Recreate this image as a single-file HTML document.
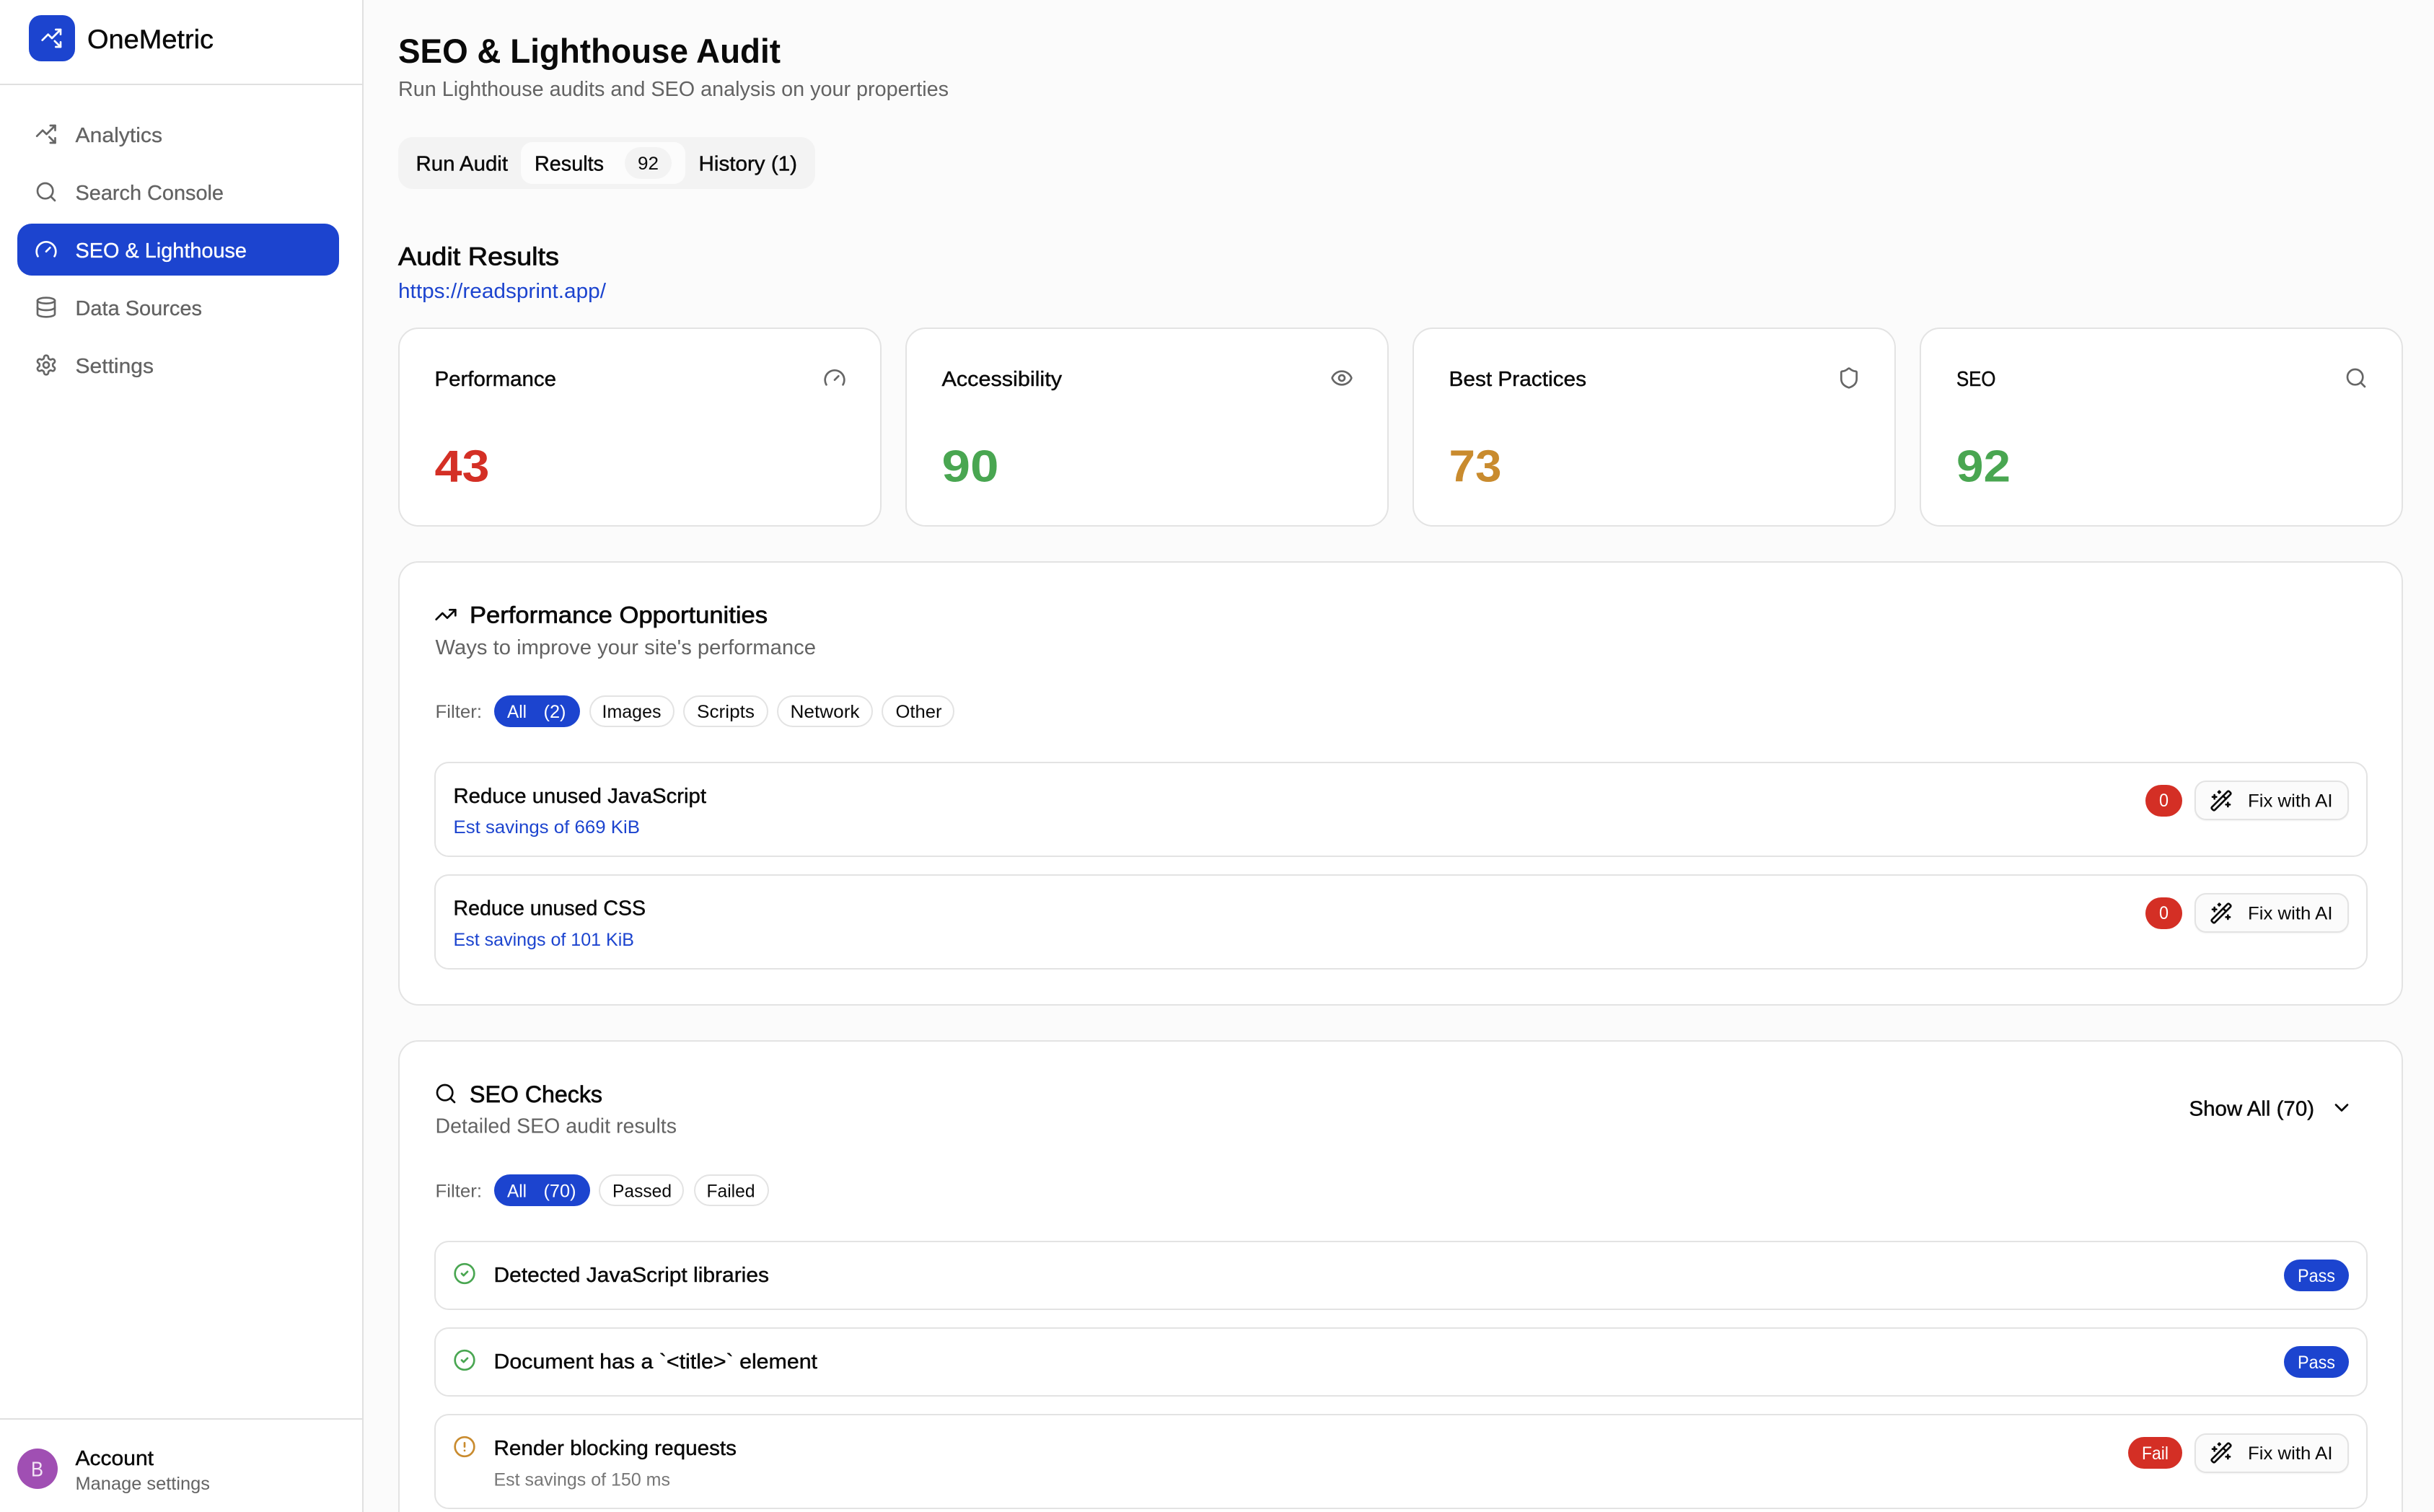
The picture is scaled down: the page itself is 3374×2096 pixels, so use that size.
<!DOCTYPE html>
<html lang="en">
<head>
<meta charset="utf-8">
<title>SEO &amp; Lighthouse Audit</title>
<style>
html,body{margin:0;padding:0;width:3374px;height:2096px;overflow:hidden;background:#fbfbfb;font-family:"Liberation Sans",Arial,sans-serif}
#page{position:relative;width:3374px;height:2096px;overflow:hidden;background:#fbfbfb}
.b{position:absolute;box-sizing:border-box}
.card{background:#fff;border:2px solid #e3e3e3;border-radius:28px}
.row{background:#fff;border:2px solid #e3e3e3;border-radius:20px;left:602px;width:2680px}
.pill{background:#fff;border:2px solid #e3e3e3;border-radius:22px;height:44px}
.blue{background:#1c44cf;border:0}
.red{background:#d42f25;border:0;border-radius:23px}
.fix{background:#fbfbfb;border:2px solid #e3e3e3;border-radius:16px;left:3042px;width:214px;height:55px;box-shadow:0 1px 2px rgba(0,0,0,.05)}
svg.o{position:absolute;left:0;top:0;width:3374px;height:2096px}
text{font-family:"Liberation Sans",Arial,sans-serif;fill:#0a0a0a;white-space:pre}
.m{fill:#636363}.w{fill:#fff}.bl{fill:#1c44cf}
.md{stroke:#0a0a0a;stroke-width:.45px}
.mw{stroke:#fff;stroke-width:.35px}
.mm{stroke:#636363;stroke-width:.3px}
.i{fill:none;stroke-linecap:round;stroke-linejoin:round;stroke-width:2}
</style>
</head>
<body>
<div id="page">
<!-- sidebar -->
<div class="b" style="left:0;top:0;width:504px;height:2096px;background:#fff;border-right:2px solid #e0e0e0"></div>
<div class="b" style="left:0;top:116px;width:502px;height:2px;background:#e0e0e0"></div>
<div class="b" style="left:0;top:1966px;width:502px;height:2px;background:#e0e0e0"></div>
<div class="b" style="left:40px;top:21px;width:64px;height:64px;border-radius:17px;background:#1c44cf"></div>
<div class="b" style="left:24px;top:310px;width:446px;height:72px;border-radius:20px;background:#1c44cf"></div>
<div class="b" style="left:24px;top:2008px;width:56px;height:56px;border-radius:50%;background:#a04fb3"></div>

<!-- tabs -->
<div class="b" style="left:552px;top:190px;width:578px;height:72px;border-radius:20px;background:#f3f3f3"></div>
<div class="b" style="left:722px;top:197px;width:228px;height:58px;border-radius:16px;background:#fcfcfc"></div>
<div class="b" style="left:866px;top:204px;width:65px;height:44px;border-radius:22px;background:#f3f3f3"></div>

<!-- score cards -->
<div class="b card" style="left:552px;top:454px;width:670px;height:276px"></div>
<div class="b card" style="left:1255px;top:454px;width:670px;height:276px"></div>
<div class="b card" style="left:1958px;top:454px;width:670px;height:276px"></div>
<div class="b card" style="left:2661px;top:454px;width:670px;height:276px"></div>

<!-- performance panel -->
<div class="b card" style="left:552px;top:778px;width:2779px;height:616px"></div>
<div class="b pill blue" style="left:685px;top:964px;width:119px"></div>
<div class="b pill" style="left:817px;top:964px;width:118px"></div>
<div class="b pill" style="left:947px;top:964px;width:118px"></div>
<div class="b pill" style="left:1077px;top:964px;width:133px"></div>
<div class="b pill" style="left:1222px;top:964px;width:101px"></div>
<div class="b row" style="top:1056px;height:132px"></div>
<div class="b row" style="top:1212px;height:132px"></div>
<div class="b red" style="left:2974px;top:1088px;width:51px;height:44px"></div>
<div class="b red" style="left:2974px;top:1244px;width:51px;height:44px"></div>
<div class="b fix" style="top:1082px"></div>
<div class="b fix" style="top:1238px"></div>

<!-- seo panel -->
<div class="b card" style="left:552px;top:1442px;width:2779px;height:720px"></div>
<div class="b pill blue" style="left:685px;top:1628px;width:133px"></div>
<div class="b pill" style="left:830px;top:1628px;width:118px"></div>
<div class="b pill" style="left:962px;top:1628px;width:104px"></div>
<div class="b row" style="top:1720px;height:96px"></div>
<div class="b row" style="top:1840px;height:96px"></div>
<div class="b row" style="top:1960px;height:132px"></div>
<div class="b pill blue" style="left:3166px;top:1746px;width:90px"></div>
<div class="b pill blue" style="left:3166px;top:1866px;width:90px"></div>
<div class="b red" style="left:2950px;top:1992px;width:75px;height:44px"></div>
<div class="b fix" style="top:1987px"></div>

<svg class="o" viewBox="0 0 3374 2096" xmlns="http://www.w3.org/2000/svg">
<defs>
<symbol id="tud" viewBox="0 0 24 24"><g class="i"><path d="M14.828 14.828 21 21"/><path d="M21 16v5h-5"/><path d="m21 3-9 9-4-4-6 6"/><path d="M21 8V3h-5"/></g></symbol>
<symbol id="search" viewBox="0 0 24 24"><g class="i"><path d="m21 21-4.34-4.34"/><circle cx="11" cy="11" r="8"/></g></symbol>
<symbol id="gauge" viewBox="0 0 24 24"><g class="i"><path d="m12 14 4-4"/><path d="M3.34 19a10 10 0 1 1 17.32 0"/></g></symbol>
<symbol id="db" viewBox="0 0 24 24"><g class="i"><ellipse cx="12" cy="5" rx="9" ry="3"/><path d="M3 5V19A9 3 0 0 0 21 19V5"/><path d="M3 12A9 3 0 0 0 21 12"/></g></symbol>
<symbol id="gear" viewBox="0 0 24 24"><g class="i"><path d="M12.22 2h-.44a2 2 0 0 0-2 2v.18a2 2 0 0 1-1 1.73l-.43.25a2 2 0 0 1-2 0l-.15-.08a2 2 0 0 0-2.73.73l-.22.38a2 2 0 0 0 .73 2.73l.15.1a2 2 0 0 1 1 1.72v.51a2 2 0 0 1-1 1.74l-.15.09a2 2 0 0 0-.73 2.73l.22.38a2 2 0 0 0 2.73.73l.15-.08a2 2 0 0 1 2 0l.43.25a2 2 0 0 1 1 1.73V20a2 2 0 0 0 2 2h.44a2 2 0 0 0 2-2v-.18a2 2 0 0 1 1-1.73l.43-.25a2 2 0 0 1 2 0l.15.08a2 2 0 0 0 2.73-.73l.22-.39a2 2 0 0 0-.73-2.73l-.15-.08a2 2 0 0 1-1-1.74v-.5a2 2 0 0 1 1-1.74l.15-.09a2 2 0 0 0 .73-2.73l-.22-.38a2 2 0 0 0-2.73-.73l-.15.08a2 2 0 0 1-2 0l-.43-.25a2 2 0 0 1-1-1.73V4a2 2 0 0 0-2-2z"/><circle cx="12" cy="12" r="3"/></g></symbol>
<symbol id="eye" viewBox="0 0 24 24"><g class="i"><path d="M2.062 12.348a1 1 0 0 1 0-.696 10.75 10.75 0 0 1 19.876 0 1 1 0 0 1 0 .696 10.75 10.75 0 0 1-19.876 0"/><circle cx="12" cy="12" r="3"/></g></symbol>
<symbol id="shield" viewBox="0 0 24 24"><g class="i"><path d="M20 13c0 5-3.5 7.5-7.66 8.95a1 1 0 0 1-.67-.01C7.5 20.5 4 18 4 13V6a1 1 0 0 1 1-1c2 0 4.5-1.2 6.24-2.72a1.17 1.17 0 0 1 1.52 0C14.51 3.81 17 5 19 5a1 1 0 0 1 1 1z"/></g></symbol>
<symbol id="tu" viewBox="0 0 24 24"><g class="i"><polyline points="22 7 13.5 15.5 8.5 10.5 2 17"/><polyline points="16 7 22 7 22 13"/></g></symbol>
<symbol id="chev" viewBox="0 0 24 24"><g class="i"><path d="m6 9 6 6 6-6"/></g></symbol>
<symbol id="wand" viewBox="0 0 24 24"><g class="i"><path d="m21.64 3.64-1.28-1.28a1.21 1.21 0 0 0-1.72 0L2.36 18.64a1.21 1.21 0 0 0 0 1.72l1.28 1.28a1.2 1.2 0 0 0 1.72 0L21.64 5.36a1.2 1.2 0 0 0 0-1.72"/><path d="m14 7 3 3"/><path d="M5 6v4"/><path d="M19 14v4"/><path d="M10 2v2"/><path d="M7 8H3"/><path d="M21 16h-4"/><path d="M11 3H9"/></g></symbol>
<symbol id="check" viewBox="0 0 24 24"><g class="i"><circle cx="12" cy="12" r="10"/><path d="m9 12 2 2 4-4"/></g></symbol>
<symbol id="alert" viewBox="0 0 24 24"><g class="i"><circle cx="12" cy="12" r="10"/><line x1="12" x2="12" y1="8" y2="12"/><line x1="12" x2="12.01" y1="16" y2="16"/></g></symbol>
</defs>

<!-- sidebar -->
<use href="#tud" x="56" y="37" width="32" height="32" stroke="#fff"/>
<text x="121" y="67" font-size="37" lengthAdjust="spacingAndGlyphs" textLength="175" class="md">OneMetric</text>

<use href="#tud" x="48.5" y="170" width="32" height="32" stroke="#666"/>
<use href="#search" x="48" y="250" width="32" height="32" stroke="#666"/>
<use href="#gauge" x="48" y="330" width="32" height="32" stroke="#fff"/>
<use href="#db" x="48" y="410" width="32" height="32" stroke="#666"/>
<use href="#gear" x="48" y="490" width="32" height="32" stroke="#666"/>
<text x="104.5" y="197" class="m mm" font-size="29" lengthAdjust="spacingAndGlyphs" textLength="120.5">Analytics</text>
<text x="104.5" y="277" class="m mm" font-size="29" lengthAdjust="spacingAndGlyphs" textLength="205.5">Search Console</text>
<text x="104.5" y="357" class="w mw" font-size="29" lengthAdjust="spacingAndGlyphs" textLength="237.5">SEO &amp; Lighthouse</text>
<text x="104.5" y="437" class="m mm" font-size="29" lengthAdjust="spacingAndGlyphs" textLength="175.5">Data Sources</text>
<text x="104.5" y="517" class="m mm" font-size="29" lengthAdjust="spacingAndGlyphs" textLength="108.5">Settings</text>

<text x="43" y="2046.5" font-size="29" style="fill:#f3e5f5" lengthAdjust="spacingAndGlyphs" textLength="17">B</text>
<text x="104.5" y="2031" font-size="28.5" class="md" lengthAdjust="spacingAndGlyphs" textLength="108.5">Account</text>
<text x="104.5" y="2065" font-size="25" class="m" lengthAdjust="spacingAndGlyphs" textLength="186.5">Manage settings</text>

<!-- header -->
<text x="552" y="87" font-size="47" font-weight="700" lengthAdjust="spacingAndGlyphs" textLength="530">SEO &amp; Lighthouse Audit</text>
<text x="552" y="133" font-size="29" class="m" lengthAdjust="spacingAndGlyphs" textLength="763">Run Lighthouse audits and SEO analysis on your properties</text>

<!-- tabs -->
<text x="576.5" y="236.5" font-size="29" class="md" lengthAdjust="spacingAndGlyphs" textLength="127.5">Run Audit</text>
<text x="741" y="236.5" font-size="29" class="md" lengthAdjust="spacingAndGlyphs" textLength="96">Results</text>
<text x="884" y="235" font-size="25" lengthAdjust="spacingAndGlyphs" textLength="29">92</text>
<text x="968.5" y="236.5" font-size="29" class="md" lengthAdjust="spacingAndGlyphs" textLength="136.5">History (1)</text>

<text x="552" y="367.5" font-size="35" class="md" style="stroke-width:.8px" lengthAdjust="spacingAndGlyphs" textLength="223">Audit Results</text>
<text x="552" y="413" font-size="29" class="bl" lengthAdjust="spacingAndGlyphs" textLength="288">https://readsprint.app/</text>

<!-- cards -->
<text x="602.5" y="535" font-size="29" class="md" lengthAdjust="spacingAndGlyphs" textLength="168.5">Performance</text>
<text x="1305.5" y="535" font-size="29" class="md" lengthAdjust="spacingAndGlyphs" textLength="166.5">Accessibility</text>
<text x="2008.5" y="535" font-size="29" class="md" lengthAdjust="spacingAndGlyphs" textLength="190.5">Best Practices</text>
<text x="2712" y="535" font-size="29" class="md" lengthAdjust="spacingAndGlyphs" textLength="54.5">SEO</text>
<use href="#gauge" x="1141" y="508" width="32" height="32" stroke="#666"/>
<use href="#eye" x="1844" y="508" width="32" height="32" stroke="#666"/>
<use href="#shield" x="2547" y="508" width="32" height="32" stroke="#666"/>
<use href="#search" x="3250" y="508" width="32" height="32" stroke="#666"/>
<text x="602.5" y="667.5" font-size="62" font-weight="700" style="fill:#d42f25" lengthAdjust="spacingAndGlyphs" textLength="76">43</text>
<text x="1305.5" y="667.5" font-size="62" font-weight="700" style="fill:#49a651" lengthAdjust="spacingAndGlyphs" textLength="79">90</text>
<text x="2008.5" y="667.5" font-size="62" font-weight="700" style="fill:#c98b2e" lengthAdjust="spacingAndGlyphs" textLength="73">73</text>
<text x="2712" y="667.5" font-size="62" font-weight="700" style="fill:#49a651" lengthAdjust="spacingAndGlyphs" textLength="75">92</text>

<!-- performance -->
<use href="#tu" x="602" y="836" width="32" height="32" stroke="#0a0a0a"/>
<text x="651" y="863.5" font-size="32" class="md" style="stroke-width:.7px" lengthAdjust="spacingAndGlyphs" textLength="413">Performance Opportunities</text>
<text x="603.5" y="907" font-size="29" class="m" lengthAdjust="spacingAndGlyphs" textLength="527.5">Ways to improve your site's performance</text>
<text x="603.5" y="995" font-size="25" class="m" lengthAdjust="spacingAndGlyphs" textLength="64.5">Filter:</text>
<text x="703" y="995" font-size="25" class="w" lengthAdjust="spacingAndGlyphs" textLength="27">All</text>
<text x="753.5" y="995" font-size="25" class="w" lengthAdjust="spacingAndGlyphs" textLength="31">(2)</text>
<text x="834.5" y="995" font-size="25" lengthAdjust="spacingAndGlyphs" textLength="82">Images</text>
<text x="966" y="995" font-size="25" lengthAdjust="spacingAndGlyphs" textLength="80">Scripts</text>
<text x="1095.5" y="995" font-size="25" lengthAdjust="spacingAndGlyphs" textLength="96">Network</text>
<text x="1241.5" y="995" font-size="25" lengthAdjust="spacingAndGlyphs" textLength="64">Other</text>

<text x="628.5" y="1113" font-size="29" class="md" lengthAdjust="spacingAndGlyphs" textLength="350.5">Reduce unused JavaScript</text>
<text x="628.5" y="1155" font-size="25" class="bl" lengthAdjust="spacingAndGlyphs" textLength="258.5">Est savings of 669 KiB</text>
<text x="628.5" y="1268.5" font-size="29" class="md" lengthAdjust="spacingAndGlyphs" textLength="266.5">Reduce unused CSS</text>
<text x="628.5" y="1311" font-size="25" class="bl" lengthAdjust="spacingAndGlyphs" textLength="250.5">Est savings of 101 KiB</text>
<text x="2993" y="1118" font-size="25" class="w" lengthAdjust="spacingAndGlyphs" textLength="13">0</text>
<text x="2993" y="1274" font-size="25" class="w" lengthAdjust="spacingAndGlyphs" textLength="13">0</text>
<use href="#wand" x="3063" y="1094" width="32" height="32" stroke="#0a0a0a"/>
<use href="#wand" x="3063" y="1250" width="32" height="32" stroke="#0a0a0a"/>
<text x="3116" y="1118.5" font-size="25" lengthAdjust="spacingAndGlyphs" textLength="117.5">Fix with AI</text>
<text x="3116" y="1274.5" font-size="25" lengthAdjust="spacingAndGlyphs" textLength="117.5">Fix with AI</text>

<!-- seo -->
<use href="#search" x="602" y="1500" width="32" height="32" stroke="#0a0a0a"/>
<text x="651" y="1528" font-size="32" class="md" style="stroke-width:.7px" lengthAdjust="spacingAndGlyphs" textLength="184">SEO Checks</text>
<text x="603.5" y="1570.5" font-size="29" class="m" lengthAdjust="spacingAndGlyphs" textLength="334.5">Detailed SEO audit results</text>
<text x="3034.5" y="1546.5" font-size="29" class="md" lengthAdjust="spacingAndGlyphs" textLength="173.5">Show All (70)</text>
<use href="#chev" x="3230" y="1519.5" width="32" height="32" stroke="#0a0a0a"/>
<text x="603.5" y="1659.5" font-size="25" class="m" lengthAdjust="spacingAndGlyphs" textLength="64.5">Filter:</text>
<text x="703" y="1659.5" font-size="25" class="w" lengthAdjust="spacingAndGlyphs" textLength="27">All</text>
<text x="753.5" y="1659.5" font-size="25" class="w" lengthAdjust="spacingAndGlyphs" textLength="45">(70)</text>
<text x="849" y="1659.5" font-size="25" lengthAdjust="spacingAndGlyphs" textLength="82">Passed</text>
<text x="979.5" y="1659.5" font-size="25" lengthAdjust="spacingAndGlyphs" textLength="67">Failed</text>

<use href="#check" x="628" y="1749.5" width="32" height="32" stroke="#49a651"/>
<use href="#check" x="628" y="1869.5" width="32" height="32" stroke="#49a651"/>
<use href="#alert" x="628" y="1989.5" width="32" height="32" stroke="#c98b2e"/>
<text x="684.5" y="1777" font-size="29" class="md" lengthAdjust="spacingAndGlyphs" textLength="381.5">Detected JavaScript libraries</text>
<text x="684.5" y="1897" font-size="29" class="md" lengthAdjust="spacingAndGlyphs" textLength="448.5">Document has a `&lt;title&gt;` element</text>
<text x="684.5" y="2017" font-size="29" class="md" lengthAdjust="spacingAndGlyphs" textLength="336.5">Render blocking requests</text>
<text x="684.5" y="2059.5" font-size="25" style="fill:#777" lengthAdjust="spacingAndGlyphs" textLength="244.5">Est savings of 150 ms</text>
<text x="3185" y="1777" font-size="25" class="w" lengthAdjust="spacingAndGlyphs" textLength="52">Pass</text>
<text x="3185" y="1897" font-size="25" class="w" lengthAdjust="spacingAndGlyphs" textLength="52">Pass</text>
<text x="2969" y="2023" font-size="25" class="w" lengthAdjust="spacingAndGlyphs" textLength="37">Fail</text>
<use href="#wand" x="3063" y="1998" width="32" height="32" stroke="#0a0a0a"/>
<text x="3116" y="2023" font-size="25" lengthAdjust="spacingAndGlyphs" textLength="117.5">Fix with AI</text>
</svg>
</div>
</body>
</html>
